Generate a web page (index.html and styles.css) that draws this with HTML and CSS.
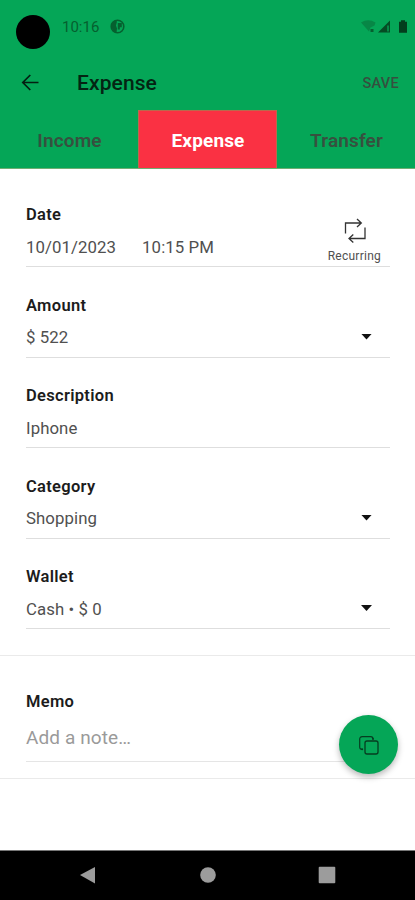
FILE: index.html
```html
<!DOCTYPE html>
<html lang="en">
<head>
<meta charset="utf-8">
<title>Expense</title>
<link rel="stylesheet" href="styles.css">
</head>
<body>
<div class="screen">
  <header class="header">
    <div class="status">
      <span class="camera"></span>
      <span class="clock">10:16</span>
      <svg class="app-icon" width="15" height="15" viewBox="0 0 15 15"><circle cx="7.500" cy="7.500" r="6.300" fill="none" stroke="#06602f" stroke-width="1.600"/><path d="M1.500 4 5 1.500 7 2.500 6 6.500 7 9.500 6.500 13.500 3.500 12.500 1.200 8zM7.800 4h4v4.200H9.800v2.300h-2z" fill="#06602f"/></svg>
      <svg class="signals" width="48" height="16" viewBox="0 0 48 16"><path d="M1 3.500Q8 -1 15.500 3.500L14.500 6.500 10.500 8.500 9 12.500z" fill="#078746"/><path d="M10.500 10h3v3h-3z" fill="#05602f"/><path d="M18 13.500 30 1.500V13.500z" fill="#054c24"/><path d="M27.300 6.500h1.400v6h-1.400z" fill="#05a657"/><path d="M41 1.300h4v1.500h2v11h-8v-11h2z" fill="#033e1d"/></svg>
    </div>
    <div class="toolbar">
      <svg class="back" width="18" height="18" viewBox="0 0 18 18"><path d="M17.500 8.500H1.800M9.300 1 1.800 8.500l7.500 7.500" fill="none" stroke="#041f11" stroke-width="1.700"/></svg>
      <h1 class="title">Expense</h1>
      <span class="save">SAVE</span>
    </div>
    <nav class="tabs">
      <span class="tab">Income</span>
      <span class="tab active">Expense</span>
      <span class="tab">Transfer</span>
    </nav>
  </header>
  <main class="form">
    <section class="fields">
      <div class="field">
        <div class="label">Date</div>
        <div class="value"><span>10/01/2023</span><span>10:15 PM</span></div>
        <div class="recurring">
          <svg width="24" height="26" viewBox="0 0 24 26"><path d="M2.500 15.500V5H18M14 1l4.300 4-4.300 4M22 9.500V20.500H6.500M10.300 16.500 6 20.500l4.300 4" fill="none" stroke="#333" stroke-width="1.300"/></svg>
          <span>Recurring</span>
        </div>
      </div>
      <div class="field"><div class="label">Amount</div><div class="value">$ 522</div><i class="caret"></i></div>
      <div class="field"><div class="label">Description</div><div class="value">Iphone</div></div>
      <div class="field"><div class="label">Category</div><div class="value">Shopping</div><i class="caret"></i></div>
      <div class="field"><div class="label">Wallet</div><div class="value">Cash • $ 0</div><i class="caret"></i></div>
    </section>
    <section class="memo">
      <div class="label">Memo</div>
      <div class="note">Add a note…</div>
    </section>
    <button class="fab" aria-label="Duplicate"><svg width="22" height="22" viewBox="0 0 22 22"><path d="M4 15.300Q1.700 15.300 1.700 13V5.200Q1.700 2.700 4.200 2.700h8.500q2.300 0 2.300 2.200" fill="none" stroke="#063d20" stroke-width="1.200"/><circle cx="4.200" cy="15.300" r="1" fill="#063d20"/><circle cx="15" cy="4.900" r="1" fill="#063d20"/><rect x="7" y="7" width="13" height="13" rx="2" fill="none" stroke="#063d20" stroke-width="1.300"/></svg></button>
  </main>
  <footer class="navbar">
    <svg width="18" height="18" viewBox="0 0 18 18"><path d="M1 9 16 1v16.500z" fill="#9c9c9c"/></svg>
    <svg width="18" height="18" viewBox="0 0 18 18"><circle cx="9" cy="9" r="7.800" fill="#9c9c9c"/></svg>
    <svg width="18" height="18" viewBox="0 0 18 18"><rect x=".7" y=".7" width="16.600" height="16.600" rx="1" fill="#9c9c9c"/></svg>
  </footer>
</div>
</body>
</html>
```
FILE: styles.css
```css
* { box-sizing: border-box; }
body { margin: 0; font-family: Roboto, "Liberation Sans", sans-serif; }
.screen { width: 415px; height: 900px; display: flex; flex-direction: column; background: #fff; overflow: hidden; }
.header { height: 169px; background: #05a657; display: flex; flex-direction: column; flex: none; border-bottom: 1px solid #6fae72; }
.status { height: 55px; padding: 0 7px 0 16px; display: flex; align-items: flex-start; }
.camera { width: 34px; height: 34px; margin-top: 15px; border-radius: 50%; background: #000; }
.clock { margin: 18px 0 0 12px; width: 48px; font-size: 15px; line-height: 18px; color: #06602f; }
.app-icon { margin-top: 19px; }
.signals { margin: 19px 0 0 auto; }
.toolbar { height: 55px; padding: 0 16px 0 21px; display: flex; align-items: center; }
.title { margin: 0 0 0 38px; font-size: 21px; line-height: 24px; font-weight: 500; letter-spacing: .1px; color: #042413; }
.save { margin-left: auto; padding-top: 2px; font-size: 14.5px; font-weight: 500; letter-spacing: .3px; color: #364f3f; }
.tabs { flex: 1; display: grid; grid-template-columns: 138px 139px 138px; }
.tab { display: flex; align-items: center; justify-content: center; padding: 3px 0 0 1px; font-size: 19px; font-weight: 600; letter-spacing: .15px; color: #37503f; }
.active { padding-top: 2px; background: #fa3143; color: #fff; border: 1px solid #b96a4c; border-bottom: 0; font-weight: 700; }
.form { flex: 1; position: relative; }
.fields { height: 487px; padding: 7.5px 25px 0 26px; border-bottom: 1px solid #eaeaea; }
.field { height: 90.5px; position: relative; padding-top: 28.5px; border-bottom: 1px solid #dedede; }
.label { width: max-content; font-size: 16.5px; line-height: 20px; font-weight: 600; letter-spacing: .3px; color: #1c1c1c; }
.value { width: max-content; margin-top: 10.5px; display: flex; gap: 26px; font-size: 16.8px; line-height: 22px; letter-spacing: .08px; color: #505050; }
.recurring { position: absolute; right: 9px; bottom: 2px; display: flex; flex-direction: column; align-items: center; gap: 4px; font-size: 12px; line-height: 16px; letter-spacing: .25px; color: #505050; }
.recurring svg { margin-left: 2px; }
.caret { position: absolute; right: 18px; bottom: 17px; width: 11px; height: 6px; background: #111; clip-path: polygon(0 0, 100% 0, 50% 100%); }
.memo { height: 123px; padding: 35.5px 25px 0 26px; border-bottom: 1px solid #eaeaea; }
.note { height: 50.5px; padding-top: 14.5px; font-size: 19px; line-height: 24px; letter-spacing: .1px; color: #9a9a9a; border-bottom: 1px solid #e5e5e5; }
.fab { position: absolute; right: 17px; top: 546px; width: 59px; height: 59px; padding: 0; border: 0; border-radius: 50%; background: #05a657; display: flex; align-items: center; justify-content: center; box-shadow: 0 3px 6px rgba(0,0,0,.28); }
.navbar { height: 50px; flex: none; background: #000; border-top: 1px solid #777; display: flex; align-items: center; justify-content: space-between; padding: 0 79px 2px; }
```
